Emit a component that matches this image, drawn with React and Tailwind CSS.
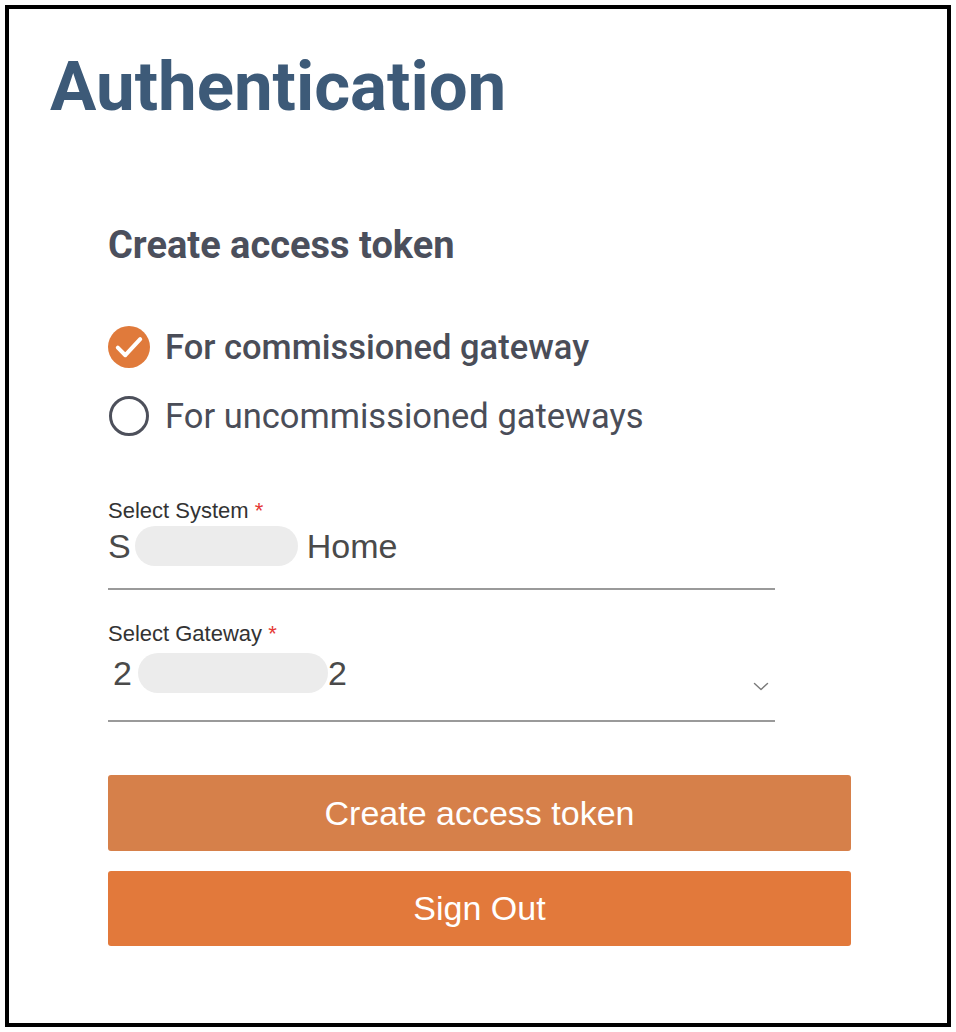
import React, { useState } from "react";

const SANS = "font-['Liberation_Sans',Arial,sans-serif]";
const ROBOTO = "font-['Roboto','Noto_Sans',sans-serif]";

const RadioOption = ({ checked, label, onSelect }) => (
  <button
    type="button"
    onClick={onSelect}
    className="flex h-[52px] items-center gap-[15px] text-left"
  >
    {checked ? (
      <span className="flex h-[42px] w-[42px] items-center justify-center rounded-full bg-[#e07a3b]">
        <svg viewBox="0 0 24 24" className="h-[42px] w-[42px]" fill="none">
          <path
            d="M5.6 12.4l4.3 4.3 8.5-9.2"
            stroke="white"
            strokeWidth="2.3"
            strokeLinecap="round"
            strokeLinejoin="round"
          />
        </svg>
      </span>
    ) : (
      <span className="ml-[1px] mr-[1px] h-[40px] w-[40px] rounded-full border-[3px] border-[#4d505b]" />
    )}
    <span
      className={`${ROBOTO} text-[34.5px] leading-none text-[#4a4d58] ${
        checked ? "font-medium" : "font-normal"
      }`}
    >
      {label}
    </span>
  </button>
);

const Redacted = ({ width }) => (
  <span
    className="inline-block h-[40px] rounded-full bg-[#ececec] blur-[0.5px]"
    style={{ width }}
  />
);

const App = () => {
  const [mode, setMode] = useState("commissioned");

  return (
    <div className="h-[1032px] w-[956px] bg-white p-[5px]">
      <div className="h-full border-4 border-black">
        <h1
          className={`${ROBOTO} pl-[41px] pt-[44px] text-[69px] font-bold leading-[68px] text-[#3d5a78]`}
        >
          Authentication
        </h1>

        <div className="ml-[99px] w-[743px]">
          <h2
            className={`${ROBOTO} mt-[102px] text-[38px] font-bold leading-[44px] text-[#4b4f5c]`}
          >
            Create access token
          </h2>

          <div className="mt-[54px] flex flex-col gap-[17px]">
            <RadioOption
              checked={mode === "commissioned"}
              label="For commissioned gateway"
              onSelect={() => setMode("commissioned")}
            />
            <RadioOption
              checked={mode === "uncommissioned"}
              label="For uncommissioned gateways"
              onSelect={() => setMode("uncommissioned")}
            />
          </div>

          {/* system select */}
          <div className="mt-[56px] w-[667px] border-b-2 border-[#9a9a9a] pb-[20px]">
            <p className={`${SANS} text-[22px] leading-[26px] text-[#333]`}>
              Select System <span className="text-[#e53935]">*</span>
            </p>
            <div
              className={`${SANS} flex h-[44px] items-center text-[34px] leading-none text-[#4a4a4a]`}
            >
              <span>S</span>
              <span className="ml-[4px] mr-[9px] flex">
                <Redacted width={163} />
              </span>
              <span>Home</span>
            </div>
          </div>

          {/* gateway select */}
          <div className="mt-[31px] w-[667px] border-b-2 border-[#9a9a9a] pb-[21px]">
            <p className={`${SANS} text-[22px] leading-[26px] text-[#333]`}>
              Select Gateway <span className="text-[#e53935]">*</span>
            </p>
            <div
              className={`${SANS} flex h-[52px] items-center text-[34px] leading-none text-[#4a4a4a]`}
            >
              <span className="pl-[5px]">2</span>
              <span className="ml-[6px] flex">
                <Redacted width={190} />
              </span>
              <span>2</span>
              <svg
                viewBox="0 0 16 9"
                className="mb-[8px] ml-auto mr-[6px] h-[9px] w-[16px] self-end"
                fill="none"
              >
                <path
                  d="M1.5 1.5l6.5 6 6.5-6"
                  stroke="#7a7a7a"
                  strokeWidth="1.4"
                  strokeLinecap="round"
                  strokeLinejoin="round"
                />
              </svg>
            </div>
          </div>

          <div className="mt-[53px] flex flex-col gap-[20px]">
            <button
              type="button"
              className={`${SANS} h-[76px] w-full rounded-[3px] bg-[#d6804a] text-[34px] text-white`}
            >
              Create access token
            </button>
            <button
              type="button"
              className={`${SANS} h-[75px] w-full rounded-[3px] bg-[#e2793b] text-[34px] text-white`}
            >
              Sign Out
            </button>
          </div>
        </div>
      </div>
    </div>
  );
};

export default App;
